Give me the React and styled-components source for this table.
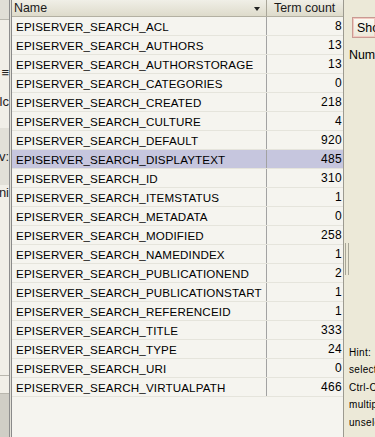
import React from 'react'
import styled, { createGlobalStyle } from 'styled-components'

const rows = [
  { name: 'EPISERVER_SEARCH_ACL', count: 8 },
  { name: 'EPISERVER_SEARCH_AUTHORS', count: 13 },
  { name: 'EPISERVER_SEARCH_AUTHORSTORAGE', count: 13 },
  { name: 'EPISERVER_SEARCH_CATEGORIES', count: 0 },
  { name: 'EPISERVER_SEARCH_CREATED', count: 218 },
  { name: 'EPISERVER_SEARCH_CULTURE', count: 4 },
  { name: 'EPISERVER_SEARCH_DEFAULT', count: 920 },
  { name: 'EPISERVER_SEARCH_DISPLAYTEXT', count: 485, selected: true },
  { name: 'EPISERVER_SEARCH_ID', count: 310 },
  { name: 'EPISERVER_SEARCH_ITEMSTATUS', count: 1 },
  { name: 'EPISERVER_SEARCH_METADATA', count: 0 },
  { name: 'EPISERVER_SEARCH_MODIFIED', count: 258 },
  { name: 'EPISERVER_SEARCH_NAMEDINDEX', count: 1 },
  { name: 'EPISERVER_SEARCH_PUBLICATIONEND', count: 2 },
  { name: 'EPISERVER_SEARCH_PUBLICATIONSTART', count: 1 },
  { name: 'EPISERVER_SEARCH_REFERENCEID', count: 1 },
  { name: 'EPISERVER_SEARCH_TITLE', count: 333 },
  { name: 'EPISERVER_SEARCH_TYPE', count: 24 },
  { name: 'EPISERVER_SEARCH_URI', count: 0 },
  { name: 'EPISERVER_SEARCH_VIRTUALPATH', count: 466 },
]

const GlobalStyle = createGlobalStyle`
  html, body { margin: 0; padding: 0; }
  body {
    font-family: "Liberation Sans", Arial, sans-serif;
    font-size: 11.6px;
    color: #000;
    background: #ece9d8;
  }
`

const Screen = styled.div`
  width: 375px;
  height: 437px;
  display: flex;
  overflow: hidden;
`

// bit of the page behind the panel
const Behind = styled.div`
  width: 9px;
  flex: none;
  display: flex;
  flex-direction: column;
  background: #f1efe8;
  border-right: 1px solid #8e8e8e;
  overflow: hidden;
`

const BehindBand = styled.div`
  height: ${(p) => p.h}px;
  flex: none;
  display: flex;
  align-items: ${(p) => p.align || 'center'};
  justify-content: flex-end;
  box-sizing: border-box;
  background: ${(p) => p.bg || 'transparent'};
  border-bottom: ${(p) => (p.line ? '1px solid #b9b7ae' : 'none')};
  font-size: 13px;
  line-height: 15px;
  color: #222;
  white-space: nowrap;
  overflow: hidden;
`

const Gap = styled.div`
  width: 1px;
  flex: none;
  background: #e3e1d8;
`

const Panel = styled.div`
  width: 331px;
  flex: none;
  display: flex;
  flex-direction: column;
  background: #f5f4ef;
  border-left: 1px solid #8a8a8a;
  border-right: 1px solid #9c9a90;
`

const HeaderRow = styled.div`
  height: 16px;
  display: flex;
  background: linear-gradient(#f0efe7, #dedbcb);
  border-bottom: 1px solid #b3b0a2;
`

const HeadCell = styled.div`
  position: relative;
  width: ${(p) => p.w}px;
  flex: none;
  padding-left: ${(p) => p.pad}px;
  box-sizing: border-box;
  line-height: 17px;
  font-size: 12.4px;
  color: #1a1a1a;
  border-left: ${(p) => (p.divider ? '1px solid #a9a699' : 'none')};
`

const SortArrow = styled.span`
  position: absolute;
  right: 6px;
  top: 7px;
  width: 0;
  height: 0;
  border-left: 3px solid transparent;
  border-right: 3px solid transparent;
  border-top: 4px solid #222;
`

const Row = styled.div`
  height: 18px;
  display: flex;
  background: ${(p) => (p.selected ? '#c6c6de' : '#f5f4ef')};
  border-bottom: 1px solid #e5e4dc;
`

const NameCell = styled.div`
  width: 254px;
  flex: none;
  padding-left: 4px;
  box-sizing: border-box;
  line-height: 19px;
  white-space: nowrap;
  overflow: hidden;
  letter-spacing: 0.15px;
`

const CountCell = styled.div`
  flex: 1;
  padding-right: 1px;
  text-align: right;
  line-height: 19px;
  font-size: 12px;
  border-left: 1px solid #a2a2a2;
  letter-spacing: 0.3px;
`

const Side = styled.div`
  position: relative;
  flex: 1;
  display: flex;
  flex-direction: column;
  padding: 17px 0 0 5px;
  background: #ece9d8;
  white-space: nowrap;
  overflow: hidden;
`

const Grip = styled.div`
  position: absolute;
  left: 1px;
  top: 243px;
  width: 2px;
  height: 32px;
  border-left: 1px solid #a8a697;
  border-right: 1px solid #a8a697;
`

const ShowButton = styled.div`
  height: 19px;
  margin-left: 3px;
  padding-left: 4px;
  border: 1px solid #c99a93;
  border-right: none;
  box-shadow: inset 0 0 0 1px #f2c9c0;
  background: linear-gradient(#fbf9f2, #ece8d9);
  line-height: 20px;
  font-size: 12.4px;
`

const Label = styled.div`
  margin-top: 10px;
  font-size: 12.4px;
  line-height: 14px;
`

const Hint = styled.div`
  margin-top: auto;
  margin-bottom: 6px;
  font-size: 10px;
  line-height: 17.5px;
  letter-spacing: 0.3px;
`

const App = () => {
  return (
    <Screen>
      <GlobalStyle />
      <Behind>
        <BehindBand h={20} bg="#e0ded6" line />
        <BehindBand h={42} />
        <BehindBand h={20}>≡</BehindBand>
        <BehindBand h={38}>lc</BehindBand>
        <BehindBand h={8} />
        <BehindBand h={57} bg="#e2e0d8">v:</BehindBand>
        <BehindBand h={54} align="flex-start">ni</BehindBand>
        <BehindBand h={137} line />
        <BehindBand h={18} line />
        <BehindBand h={60} bg="#d0cec6" />
      </Behind>
      <Gap />
      <Panel>
        <HeaderRow>
          <HeadCell w={254} pad={2}>
            Name
            <SortArrow />
          </HeadCell>
          <HeadCell w={76} pad={7} divider>
            Term count
          </HeadCell>
        </HeaderRow>
        {rows.map((r) => (
          <Row key={r.name} selected={r.selected}>
            <NameCell>{r.name}</NameCell>
            <CountCell>{r.count}</CountCell>
          </Row>
        ))}
      </Panel>
      <Side>
        <Grip />
        <ShowButton>Show</ShowButton>
        <Label>Number</Label>
        <Hint>
          Hint:
          <br />
          select
          <br />
          Ctrl-Click
          <br />
          multiple
          <br />
          unselect
        </Hint>
      </Side>
    </Screen>
  )
}

export default App
